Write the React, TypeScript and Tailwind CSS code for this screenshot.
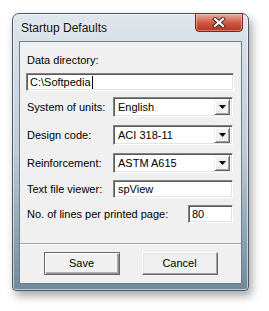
import React from 'react';

const sunken =
  'border border-t-[#828282] border-l-[#828282] border-b-white border-r-white shadow-[inset_1px_1px_0_#5a5a5a,inset_-1px_-1px_0_#e3e3e3] bg-white';

const Combo: React.FC<{ value: string }> = ({ value }) => (
  <div className={`${sunken} w-[120px] h-[20px] flex items-center`}>
    <span className="flex-1 pl-[4px] leading-[13px]">{value}</span>
    <div className="mr-[2px] w-[16px] h-[16px] bg-[#f0f0f0] border border-t-[#f0f0f0] border-l-[#f0f0f0] border-b-[#696969] border-r-[#696969] shadow-[inset_1px_1px_0_#ffffff,inset_-1px_-1px_0_#a0a0a0] flex items-center justify-center">
      <svg width="7" height="4" viewBox="0 0 7 4">
        <path d="M0 0h7L3.5 4z" fill="#000" />
      </svg>
    </div>
  </div>
);

const Row: React.FC<{ label: string; children: React.ReactNode; className?: string }> = ({
  label,
  children,
  className
}) => (
  <div className={`flex items-center ${className ?? ''}`}>
    <span className="w-[86px] leading-[13px] whitespace-nowrap">{label}</span>
    {children}
  </div>
);

export default function App() {
  return (
    <div
      className="min-h-screen bg-white pl-[12px] pt-[13px] text-black"
      style={{ fontFamily: '"Liberation Sans", Arial, sans-serif' }}
    >
      <div className="relative w-[237px] h-[278px] rounded-t-[7px] rounded-b-[4px] border border-[#4a5965] bg-gradient-to-b from-[#dfe6ec] via-[#bfcbd5] to-[#6f8a9d] shadow-[3px_5px_10px_rgba(0,0,0,0.35),inset_0_0_0_1px_rgba(255,255,255,0.55)] flex flex-col">
        {/* title bar */}
        <div className="h-[27px] flex items-center pl-[8px]">
          <span className="text-[12px] leading-none text-[#111] [text-shadow:0_0_6px_rgba(255,255,255,0.9)]">
            Startup Defaults
          </span>
        </div>

        {/* close button */}
        <div className="absolute top-[-1px] right-[5px] w-[48px] h-[19px] rounded-b-[4px] border border-[#6e2c24] bg-gradient-to-b from-[#e8ada2] via-[#cf5a47] to-[#b8321f] shadow-[inset_0_0_0_1px_rgba(255,210,200,0.45)] flex items-center justify-center">
          <svg width="14" height="11" viewBox="0 0 14 11">
            <path d="M3 2l8 7M11 2l-8 7" stroke="#4a2a26" strokeWidth="4.2" strokeLinecap="square" />
            <path d="M3 2l8 7M11 2l-8 7" stroke="#ffffff" strokeWidth="2.3" strokeLinecap="square" />
          </svg>
        </div>

        {/* client area */}
        <div className="flex-1 mx-[6px] mb-[6px] border border-[#6f7d88] bg-[#f0f0f0] text-[11px] flex flex-col">
          <div className="px-[7px] pt-[12px] leading-[13px]">Data directory:</div>
          <div className={`${sunken} mt-[6px] ml-[6px] w-[208px] h-[18px] flex items-center pl-[3px]`}>
            <span className="leading-[13px]">C:\Softpedia</span>
            <span className="ml-[1px] w-[1px] h-[13px] bg-black" />
          </div>

          <div className="pl-[7px] flex flex-col">
            <Row label="System of units:" className="mt-[6px]">
              <Combo value="English" />
            </Row>
            <Row label="Design code:" className="mt-[8px]">
              <Combo value="ACI 318-11" />
            </Row>
            <Row label="Reinforcement:" className="mt-[8px]">
              <Combo value="ASTM A615" />
            </Row>
            <Row label="Text file viewer:" className="mt-[7px]">
              <div className={`${sunken} w-[120px] h-[18px] flex items-center pl-[4px]`}>
                <span className="leading-[13px]">spView</span>
              </div>
            </Row>
            <div className="mt-[7px] flex items-center">
              <span className="w-[161px] leading-[13px] whitespace-nowrap">No. of lines per printed page:</span>
              <div className={`${sunken} w-[45px] h-[18px] flex items-center pl-[3px]`}>
                <span className="leading-[13px]">80</span>
              </div>
            </div>
          </div>

          <div className="mt-[20px] h-[2px] border-t border-[#a0a0a0] border-b border-b-white" />

          <div className="mt-[7px] flex justify-center gap-[22px]">
            <button className="w-[76px] h-[23px] border border-[#696969] bg-[#f0f0f0] shadow-[inset_1px_1px_0_#ffffff,inset_-1px_-1px_0_#8a8a8a,inset_-2px_-2px_0_#b0b0b0] text-[11px] leading-none">
              Save
            </button>
            <button className="w-[76px] h-[23px] border border-t-white border-l-white border-b-[#696969] border-r-[#696969] bg-[#f0f0f0] shadow-[inset_-1px_-1px_0_#a0a0a0,inset_1px_1px_0_#e3e3e3] text-[11px] leading-none">
              Cancel
            </button>
          </div>
        </div>
      </div>
    </div>
  );
}
